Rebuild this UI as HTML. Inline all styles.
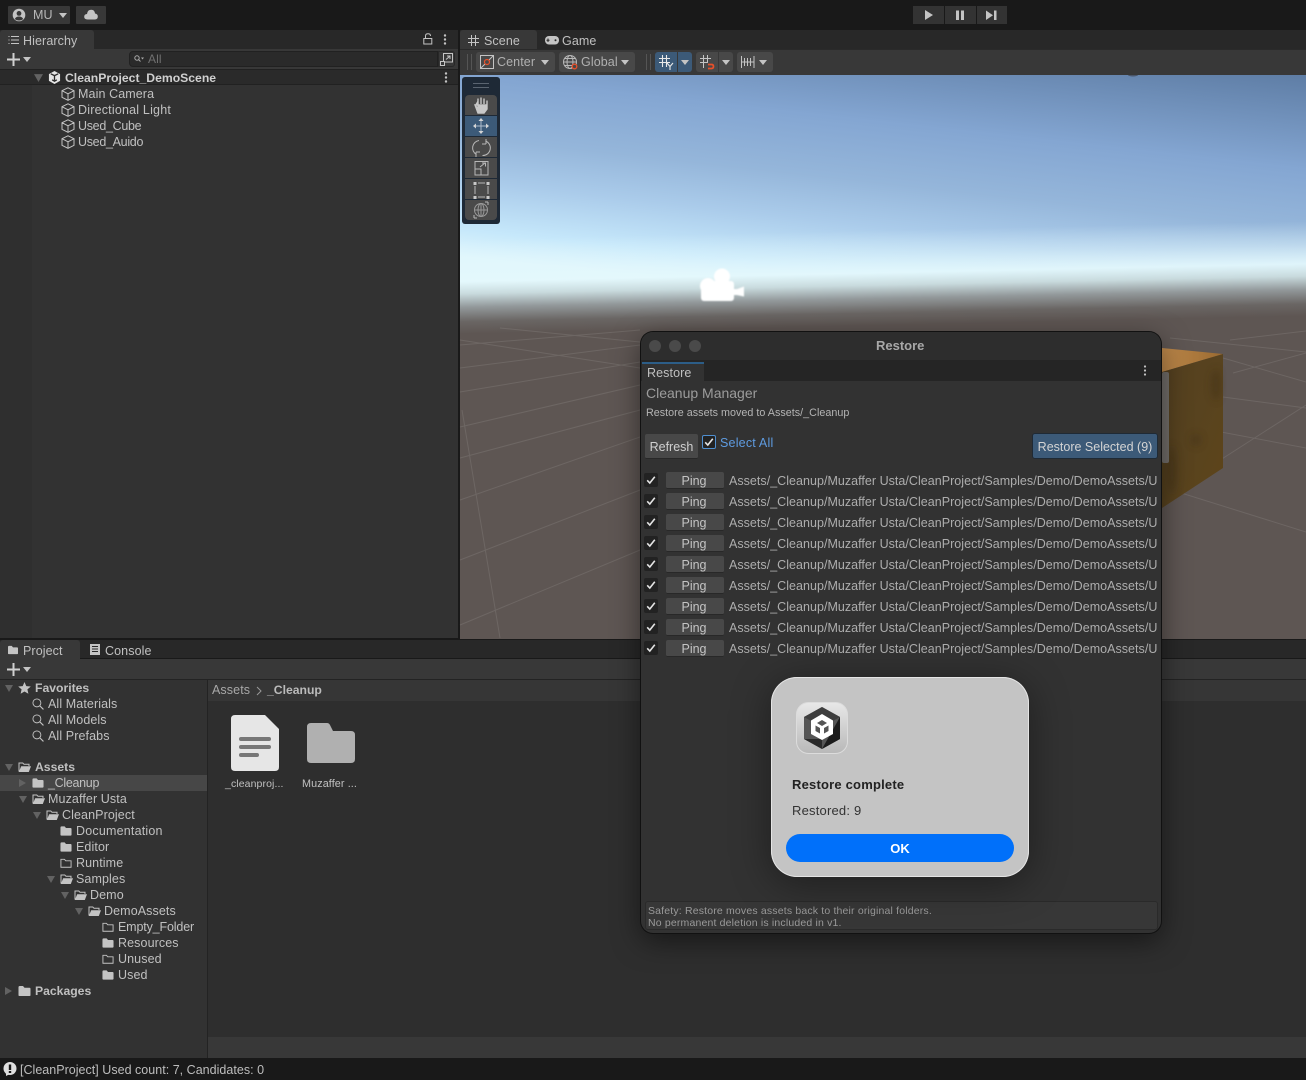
<!DOCTYPE html>
<html><head><meta charset="utf-8"><title>Unity</title>
<style>
html,body{margin:0;padding:0;background:#191919;}
#r{position:relative;width:1306px;height:1080px;overflow:hidden;background:#191919;font-family:"Liberation Sans",sans-serif;font-size:12.5px;color:#c0c0c0;}
.a{position:absolute;}
.t{position:absolute;white-space:nowrap;line-height:16px;height:16px;letter-spacing:.1px;}
.b{font-weight:bold;font-size:12.2px;letter-spacing:0;}
.u{letter-spacing:-.3px;}
svg.a{overflow:visible;}
.ck{position:absolute;left:644px;width:14px;height:14px;background:#222;border-radius:2px;}
.pg{position:absolute;left:666px;width:58px;height:17px;background:#484848;border-radius:2px;border-bottom:1px solid #282828;box-sizing:border-box;text-align:center;line-height:19px;color:#c4c4c4;padding-right:2px;}
.pt{position:absolute;left:729px;width:428px;overflow:hidden;white-space:nowrap;line-height:16px;height:16px;color:#adadad;font-size:12.5px;letter-spacing:.03px;}
.tb{position:absolute;background:#4a4a4a;}
</style></head><body><div id="r">
<svg width="0" height="0" style="position:absolute"><defs>
<symbol id="cube" viewBox="0 0 14 14"><path d="M7 .8 13 3.7V10.3L7 13.3 1 10.3V3.7ZM1 3.7 7 6.8 13 3.7M7 6.8V13.3" fill="none" stroke="#c4c4c4" stroke-width="1"/></symbol>
<symbol id="fc" viewBox="0 0 13 12"><path d="M.5 2.2Q.5 1 1.7 1H5L6.5 2.8H11.5Q12.5 2.8 12.5 3.8V10.2Q12.5 11 11.5 11H1.5Q.5 11 .5 10.2Z" fill="#c4c4c4"/></symbol>
<symbol id="fo" viewBox="0 0 13 12"><path d="M1 10.5V2H4.8L6 3.3H11V5" fill="none" stroke="#c4c4c4" stroke-width="1"/><path d="M3.2 5.2H13L10.8 11H.8Z" fill="#c4c4c4"/></symbol>
<symbol id="fe" viewBox="0 0 13 12"><path d="M1 2H4.8L6.2 3.6H12V10.6H1Z" fill="none" stroke="#c4c4c4" stroke-width="1"/></symbol>
<symbol id="mg" viewBox="0 0 13 13"><circle cx="5.3" cy="5.3" r="4.3" fill="none" stroke="#c4c4c4" stroke-width="1"/><path d="M8.4 8.4 12.4 12.4" stroke="#c4c4c4" stroke-width="1.2"/></symbol>
<symbol id="ad" viewBox="0 0 8 7"><path d="M0 0H8L4 7Z" fill="#626262"/></symbol>
<symbol id="ar" viewBox="0 0 7 8"><path d="M0 0V8L7 4Z" fill="#626262"/></symbol>
<symbol id="dd" viewBox="0 0 8 5"><path d="M0 0H8L4 5Z" fill="#c4c4c4"/></symbol>
<symbol id="chk" viewBox="0 0 14 14"><path d="M3.2 7.3 5.8 10 10.8 3.8" fill="none" stroke="#e4e4e4" stroke-width="1.6"/></symbol>
</defs></svg>

<!-- SCENE -->
<svg class="a" style="left:460px;top:75px" width="846" height="563" viewBox="460 75 846 563">
<defs>
<linearGradient id="sky" gradientUnits="userSpaceOnUse" x1="883" y1="30" x2="853" y2="300">
<stop offset="0" stop-color="#5f7ea6"/><stop offset=".34" stop-color="#84a6d2"/><stop offset=".56" stop-color="#95b6da"/><stop offset=".72" stop-color="#aacbea"/><stop offset=".9" stop-color="#c6e8fb"/><stop offset="1" stop-color="#dff6fc"/></linearGradient>
<linearGradient id="hz" gradientUnits="userSpaceOnUse" x1="883" y1="230" x2="885" y2="325">
<stop offset="0" stop-color="#e4f8fc" stop-opacity="0"/><stop offset=".25" stop-color="#e4f8fc" stop-opacity=".45"/><stop offset=".45" stop-color="#e4f8fc" stop-opacity=".92"/><stop offset=".58" stop-color="#c8dadd"/><stop offset=".72" stop-color="#92989a"/><stop offset=".87" stop-color="#6a6664"/><stop offset="1" stop-color="#5e5653"/></linearGradient>
<linearGradient id="side" x1="0" y1="0" x2="1" y2="1"><stop offset="0" stop-color="#544020"/><stop offset=".5" stop-color="#58431f"/><stop offset="1" stop-color="#5e4519"/></linearGradient>
<linearGradient id="top" x1="0" y1="0" x2="1" y2="0"><stop offset="0" stop-color="#c08a4c"/><stop offset="1" stop-color="#9a6a30"/></linearGradient>
<filter id="bl"><feGaussianBlur stdDeviation=".7"/></filter>
<filter id="bl2"><feGaussianBlur stdDeviation="4"/></filter>
</defs>
<rect x="460" y="75" width="846" height="265" fill="url(#sky)"/>
<rect x="460" y="220" width="846" height="120" fill="url(#hz)"/>
<rect x="460" y="334" width="846" height="305" fill="#5e5653"/>
<ellipse cx="1133" cy="75" rx="5" ry="1.500" fill="#4a566a"/>
<g stroke="#8a8582" stroke-width="1" opacity=".35" fill="none">
<path d="M460 345 640 330M460 368 640 345M460 392 640 362M460 427 640 385M460 458 640 410M460 500 640 437M460 560 640 490M460 625 640 550"/>
<path d="M462 410 500 638M460 340 640 368M500 328 640 342"/>
<path d="M1223 397 1306 408M1223 358 1306 382M1233 373 1306 353M1200 473 1306 405M1189 426 1306 448M1162 487 1306 532M1170 338 1306 352M1230 340 1306 331"/>
</g>
<path d="M1162 348 1223 354 1162 372Z" fill="url(#top)"/>
<path d="M1162 372 1223 354V468L1162 508Z" fill="url(#side)"/>
<g filter="url(#bl2)" fill="#3a2a14" opacity=".4"><ellipse cx="1216" cy="385" rx="5" ry="16"/><ellipse cx="1172" cy="470" rx="5" ry="25"/><ellipse cx="1196" cy="440" rx="5" ry="6"/></g>
<rect x="1162" y="372" width="7" height="91" rx="2" fill="#726e6a"/>
<g filter="url(#bl)" fill="#fff"><circle cx="722" cy="276.500" r="8"/><circle cx="708" cy="286" r="8"/><rect x="701" y="281" width="33" height="20" rx="3"/><path d="M733 289H737L744 286.500V296.500L737 295H733Z"/></g>
</svg>

<!-- tool overlay -->
<div class="a" style="left:462px;top:77px;width:38px;height:147px;background:#1e2936;border-radius:3px"></div>
<div class="a" style="left:473px;top:83px;width:16px;height:1px;background:#5a6470"></div>
<div class="a" style="left:473px;top:87px;width:16px;height:1px;background:#5a6470"></div>
<div class="tb" style="left:465px;top:95px;width:32px;height:20px;border-radius:4px 4px 0 0"></div>
<div class="tb" style="left:465px;top:116px;width:32px;height:20px;background:#3c5a78"></div>
<div class="tb" style="left:465px;top:137px;width:32px;height:20px"></div>
<div class="tb" style="left:465px;top:158px;width:32px;height:20px"></div>
<div class="tb" style="left:465px;top:179px;width:32px;height:20px"></div>
<div class="tb" style="left:465px;top:200px;width:32px;height:20px;border-radius:0 0 4px 4px"></div>
<svg class="a" style="left:465px;top:95px" width="32" height="126" viewBox="0 0 32 126" fill="none" stroke="#b8b8b8" stroke-width="1">
<path d="M10 10 13 14V5M13 9V3.500M16 9V2.500M19 9V3.500M22 10V5.500V14L19 18H13L10 10Z" fill="#c8c8c8" stroke="#c8c8c8" stroke-width="1.400"/>
<path d="M16 25V37M10 31H22" stroke="#aebccc"/><path d="M16 23 13.500 26H18.500ZM16 39 13.500 36H18.500ZM8 31 11 28.500V33.500ZM24 31 21 28.500V33.500Z" fill="#d4d4d4" stroke="none"/>
<path d="M11.500 59.500A7.500 7.500 0 0 1 14 45.500M20.500 46A7.500 7.500 0 0 1 17.500 60.500"/><path d="M21 44V49M21 49H17M11 62V57M11 57H15"/>
<rect x="10" y="66.500" width="13" height="13.500"/><rect x="10" y="74" width="6" height="6"/><path d="M15 72 20 68M17 68H20.500V71.500"/>
<path d="M13 88H20M13 102H20M10 91V99M23 91V99"/><rect x="8.500" y="87" width="3" height="3" fill="#c8c8c8" stroke="none"/><rect x="21.500" y="87" width="3" height="3" fill="#c8c8c8" stroke="none"/><rect x="8.500" y="101" width="3" height="3" fill="#c8c8c8" stroke="none"/><rect x="21.500" y="101" width="3" height="3" fill="#c8c8c8" stroke="none"/>
<circle cx="16" cy="115" r="6.500" stroke="#999"/><path d="M16 108V122M9 115H23" stroke="#999"/><ellipse cx="16" cy="115" rx="3" ry="6.500" stroke="#999"/><path d="M9 123 12 123M9 123 9 120M23 107H20M23 107V110"/>
</svg>

<!-- TOP BAR -->
<div class="a" style="left:8px;top:6px;width:62px;height:18px;background:#383838;border-radius:1px"></div>
<svg class="a" style="left:12px;top:8px" width="14" height="14" viewBox="0 0 14 14"><circle cx="7" cy="7" r="6.300" fill="#c4c4c4"/><circle cx="7" cy="5.400" r="2.400" fill="#383838"/><path d="M2.800 11Q4 8.500 7 8.500T11.200 11Q9.500 12.500 7 12.500T2.800 11Z" fill="#383838"/></svg>
<div class="t" style="left:33px;top:7px;color:#b8b8b8">MU</div>
<svg class="a" style="left:59px;top:13px" width="8" height="5"><use href="#dd"/></svg>
<div class="a" style="left:76px;top:6px;width:30px;height:18px;background:#383838;border-radius:1px"></div>
<svg class="a" style="left:84px;top:9px" width="14" height="11" viewBox="0 0 14 11"><path d="M3.500 10.500Q.2 10.500.2 7.800T3 5Q3.500 .8 7.300 .8 10.500 .8 11 4.500 14 5 13.800 7.800T10.800 10.500Z" fill="#c4c4c4"/></svg>
<div class="a" style="left:913px;top:6px;width:31px;height:18px;background:#333"></div>
<div class="a" style="left:945px;top:6px;width:31px;height:18px;background:#333"></div>
<div class="a" style="left:977px;top:6px;width:30px;height:18px;background:#333"></div>
<svg class="a" style="left:913px;top:6px" width="94" height="18" viewBox="0 0 94 18" fill="#c4c4c4"><path d="M12 4V14L20 9Z"/><rect x="43" y="4.500" width="3" height="9.500"/><rect x="48" y="4.500" width="3" height="9.500"/><path d="M73 4.500V14L80 9.200Z"/><rect x="81" y="4.500" width="2.500" height="9.500"/></svg>

<!-- HIERARCHY -->
<div class="a" style="left:0;top:30px;width:458px;height:19px;background:#282828"></div>
<div class="a" style="left:0;top:30px;width:94px;height:19px;background:#383838;border-radius:3px 3px 0 0"></div>
<svg class="a" style="left:8px;top:35px" width="11" height="10" viewBox="0 0 11 10" stroke="#c4c4c4" fill="none"><path d="M3 1.500H11M3 5H11M3 8.500H11M.5 1.500H1.500M.5 5H1.500M.5 8.500H1.500"/></svg>
<div class="t" style="left:23px;top:33px">Hierarchy</div>
<svg class="a" style="left:423px;top:33px" width="10" height="12" viewBox="0 0 10 12" fill="none" stroke="#c4c4c4"><path d="M2.500 5V3Q2.500 .8 5 .8T7.500 3"/><rect x=".8" y="5.500" width="8" height="5.500"/></svg>
<svg class="a" style="left:443px;top:34px" width="4" height="11" fill="#c4c4c4"><circle cx="2" cy="1.500" r="1.200"/><circle cx="2" cy="5.500" r="1.200"/><circle cx="2" cy="9.500" r="1.200"/></svg>
<div class="a" style="left:0;top:49px;width:458px;height:20px;background:#383838"></div>
<svg class="a" style="left:7px;top:53px" width="13" height="13"><path d="M6.500 0V13M0 6.500H13" stroke="#d0d0d0" stroke-width="2"/></svg>
<svg class="a" style="left:23px;top:57px" width="8" height="5"><use href="#dd"/></svg>
<div class="a" style="left:129px;top:51px;width:309px;height:16px;background:#2a2a2a;border-radius:4px 0 0 4px;border:1px solid #212121;box-sizing:border-box"></div>
<svg class="a" style="left:134px;top:55px" width="10" height="8" viewBox="0 0 10 8" fill="none" stroke="#aaa"><circle cx="3" cy="3" r="2.200"/><path d="M4.500 4.500 6.500 6.500"/><path d="M7 2.500H10L8.500 4.500Z" fill="#aaa" stroke="none"/></svg>
<div class="t" style="left:148px;top:51px;color:#707070;font-size:12px">All</div>
<div class="a" style="left:438px;top:51px;width:17px;height:16px;background:#383838;border:1px solid #282828;border-radius:0 3px 3px 0;box-sizing:border-box"></div>
<svg class="a" style="left:440px;top:53px" width="13" height="13" viewBox="0 0 13 13" fill="none" stroke="#c4c4c4"><rect x="3.500" y=".5" width="9" height="8.500"/><rect x=".5" y="8.500" width="4" height="4" fill="#383838"/><path d="M6 6.500 9.500 3.500M7 3H10V6"/></svg>
<div class="a" style="left:0;top:69px;width:458px;height:569px;background:#323232"></div>
<div class="a" style="left:0;top:85px;width:32px;height:553px;background:#2f2f2f"></div>
<div class="a" style="left:0;top:69px;width:458px;height:16px;background:#2a2a2a;border-top:1px solid #212121;border-bottom:1px solid #212121;box-sizing:border-box"></div>
<svg class="a" style="left:34px;top:74px" width="9" height="8"><use href="#ad"/></svg>
<svg class="a" style="left:48px;top:71px" width="13" height="13" viewBox="0 0 14 14"><path d="M7 0 13 3.400V10.600L7 14 1 10.600V3.400Z" fill="#e4e4e4"/><path d="M7 5 3 3M7 5 11 3M7 5V10M4.500 9.500 7 11 9.500 9.500" stroke="#2a2a2a" stroke-width="1.400" fill="none"/></svg>
<div class="t b" style="left:65px;top:70px;color:#d0d0d0">CleanProject_DemoScene</div>
<svg class="a" style="left:444px;top:72px" width="4" height="11" fill="#c4c4c4"><circle cx="2" cy="1.500" r="1.200"/><circle cx="2" cy="5.500" r="1.200"/><circle cx="2" cy="9.500" r="1.200"/></svg>
<svg class="a" style="left:61px;top:87px" width="14" height="14"><use href="#cube"/></svg><div class="t" style="left:78px;top:86px">Main Camera</div>
<svg class="a" style="left:61px;top:103px" width="14" height="14"><use href="#cube"/></svg><div class="t" style="left:78px;top:102px;letter-spacing:.2px">Directional Light</div>
<svg class="a" style="left:61px;top:119px" width="14" height="14"><use href="#cube"/></svg><div class="t u" style="left:78px;top:118px">Used_Cube</div>
<svg class="a" style="left:61px;top:135px" width="14" height="14"><use href="#cube"/></svg><div class="t u" style="left:78px;top:134px">Used_Auido</div>

<!-- SCENE TABS + TOOLBAR -->
<div class="a" style="left:460px;top:30px;width:846px;height:19px;background:#282828"></div>
<div class="a" style="left:460px;top:30px;width:77px;height:19px;background:#383838;border-radius:3px 3px 0 0"></div>
<svg class="a" style="left:468px;top:35px" width="11" height="11" stroke="#c4c4c4" fill="none"><path d="M3.500 0V11M7.500 0V11M0 3.500H11M0 7.500H11"/></svg>
<div class="t" style="left:484px;top:33px">Scene</div>
<svg class="a" style="left:545px;top:36px" width="14" height="9" viewBox="0 0 14 9"><rect x="0" y="0" width="14" height="8.500" rx="4" fill="#c4c4c4"/><path d="M3 2.500V6M1.500 4.200H4.500" stroke="#282828"/><circle cx="10.500" cy="4.200" r="1" fill="#282828"/></svg>
<div class="t" style="left:562px;top:33px">Game</div>
<div class="a" style="left:460px;top:49px;width:846px;height:26px;background:#383838;border-top:1px solid #2a2a2a;box-sizing:border-box"></div>
<div class="a" style="left:467px;top:54px;width:3px;height:16px;border-left:1px solid #555;border-right:1px solid #555"></div>
<div class="a" style="left:476px;top:52px;width:79px;height:20px;background:#484848;border-radius:3px"></div>
<svg class="a" style="left:480px;top:55px" width="14" height="14" viewBox="0 0 14 14" fill="none"><rect x=".5" y=".5" width="13" height="13" stroke="#c4c4c4"/><path d="M1 13 13 1" stroke="#c4c4c4"/><circle cx="7" cy="7" r="2.500" stroke="#e8502a" stroke-width="1.200" fill="#484848"/></svg>
<div class="t" style="left:497px;top:54px;color:#b0b0b0">Center</div>
<svg class="a" style="left:541px;top:60px" width="8" height="5"><use href="#dd"/></svg>
<div class="a" style="left:559px;top:52px;width:76px;height:20px;background:#484848;border-radius:3px"></div>
<svg class="a" style="left:563px;top:55px" width="15" height="15" viewBox="0 0 15 15" fill="none" stroke="#b8b8b8"><circle cx="7" cy="7" r="6.500"/><ellipse cx="7" cy="7" rx="3" ry="6.500"/><path d="M.5 7H13.500M1.500 3.500H12.500M1.500 10.500H12.500"/><circle cx="11.500" cy="11.500" r="2.300" stroke="#e8502a" stroke-width="1.300" fill="#484848"/></svg>
<div class="t" style="left:581px;top:54px;color:#b0b0b0">Global</div>
<svg class="a" style="left:621px;top:60px" width="8" height="5"><use href="#dd"/></svg>
<div class="a" style="left:646px;top:54px;width:3px;height:16px;border-left:1px solid #555;border-right:1px solid #555"></div>
<div class="a" style="left:655px;top:52px;width:22px;height:20px;background:#3c5a78;border-radius:3px 0 0 3px"></div>
<div class="a" style="left:678px;top:52px;width:14px;height:20px;background:#3c5a78;border-radius:0 3px 3px 0"></div>
<svg class="a" style="left:659px;top:55px" width="15" height="15" viewBox="0 0 15 15" fill="none" stroke="#e8e8e8"><path d="M3.500 0V12M7.500 0V12M0 3.500H11M0 7.500H11M8 8 11 11.500 14 8M11 11.500V15" stroke-width="1.100"/></svg>
<svg class="a" style="left:681px;top:60px" width="8" height="5"><use href="#dd"/></svg>
<div class="a" style="left:696px;top:52px;width:22px;height:20px;background:#484848;border-radius:3px 0 0 3px"></div>
<div class="a" style="left:719px;top:52px;width:14px;height:20px;background:#484848;border-radius:0 3px 3px 0"></div>
<svg class="a" style="left:700px;top:55px" width="15" height="15" viewBox="0 0 15 15" fill="none"><path d="M3.500 0V13M7.500 0V8M0 3.500H11M0 7.500H8" stroke="#c4c4c4"/><path d="M8 9.500H11.500Q13.500 9.500 13.500 11.500T11.500 13.500H8" stroke="#e8502a" stroke-width="1.700"/></svg>
<svg class="a" style="left:722px;top:60px" width="8" height="5"><use href="#dd"/></svg>
<div class="a" style="left:737px;top:52px;width:36px;height:20px;background:#484848;border-radius:3px"></div>
<svg class="a" style="left:741px;top:55px" width="14" height="14" fill="none" stroke="#c4c4c4"><path d="M.5 1V13M13 1V13M3.500 3V11M6.500 3V11M9.500 3V11M.5 7H13"/></svg>
<svg class="a" style="left:759px;top:60px" width="8" height="5"><use href="#dd"/></svg>

<!-- PROJECT -->
<div class="a" style="left:0;top:640px;width:1306px;height:18px;background:#282828"></div>
<div class="a" style="left:0;top:640px;width:80px;height:19px;background:#383838;border-radius:3px 3px 0 0"></div>
<svg class="a" style="left:7px;top:645px" width="12" height="10"><use href="#fc"/></svg>
<div class="t" style="left:23px;top:643px">Project</div>
<svg class="a" style="left:90px;top:644px" width="10" height="11" viewBox="0 0 10 11"><rect width="10" height="11" fill="#c4c4c4"/><path d="M2 2.500H8M2 5H8M2 7.500H8" stroke="#282828"/></svg>
<div class="t" style="left:105px;top:643px">Console</div>
<div class="a" style="left:0;top:659px;width:1306px;height:20px;background:#383838"></div>
<svg class="a" style="left:7px;top:663px" width="13" height="13"><path d="M6.500 0V13M0 6.500H13" stroke="#d0d0d0" stroke-width="2"/></svg>
<svg class="a" style="left:23px;top:667px" width="8" height="5"><use href="#dd"/></svg>
<div class="a" style="left:0;top:679px;width:1306px;height:1px;background:#232323"></div>
<div class="a" style="left:0;top:680px;width:207px;height:378px;background:#323232"></div>
<div class="a" style="left:207px;top:680px;width:1px;height:378px;background:#232323"></div>
<div class="a" style="left:208px;top:680px;width:1098px;height:21px;background:#363636"></div>
<div class="a" style="left:208px;top:701px;width:1098px;height:336px;background:#2e2e2e"></div>
<div class="a" style="left:208px;top:1037px;width:1098px;height:21px;background:#383838"></div>
<div class="t" style="left:212px;top:682px;color:#a8a8a8">Assets</div>
<svg class="a" style="left:256px;top:686px" width="6" height="10" fill="none" stroke="#999"><path d="M1 1 5 5 1 9"/></svg>
<div class="t b" style="left:267px;top:682px;color:#bbb">_Cleanup</div>
<svg class="a" style="left:231px;top:715px" width="48" height="56" viewBox="0 0 48 56"><path d="M4 0H34L48 14V52Q48 56 44 56H4Q0 56 0 52V4Q0 0 4 0Z" fill="#e6e6e6"/><rect x="8" y="22" width="32" height="4" rx="2" fill="#777"/><rect x="8" y="30" width="32" height="4" rx="2" fill="#777"/><rect x="8" y="38" width="20" height="4" rx="2" fill="#777"/></svg>
<svg class="a" style="left:307px;top:723px" width="48" height="40" viewBox="0 0 48 40"><path d="M0 4Q0 0 4 0H20Q22 0 23 2L26 8H44Q48 8 48 12V36Q48 40 44 40H4Q0 40 0 36Z" fill="#b0b0b0"/></svg>
<div class="t" style="left:225px;top:776px;font-size:10.500px">_cleanproj...</div>
<div class="t" style="left:302px;top:776px;font-size:10.800px">Muzaffer ...</div>

<!-- tree -->
<div class="a" style="left:0;top:775px;width:207px;height:16px;background:#474747"></div>
<svg class="a" style="left:5px;top:685px" width="8" height="7"><use href="#ad"/></svg>
<svg class="a" style="left:18px;top:682px" width="13" height="12" viewBox="0 0 13 12"><path d="M6.500 0 8.300 4.100 12.800 4.500 9.400 7.400 10.400 11.800 6.500 9.500 2.600 11.800 3.600 7.400 .2 4.500 4.700 4.100Z" fill="#c4c4c4"/></svg>
<div class="t b" style="left:35px;top:680px">Favorites</div>
<svg class="a" style="left:32px;top:698px" width="12" height="12"><use href="#mg"/></svg><div class="t" style="left:48px;top:696px">All Materials</div>
<svg class="a" style="left:32px;top:714px" width="12" height="12"><use href="#mg"/></svg><div class="t" style="left:48px;top:712px">All Models</div>
<svg class="a" style="left:32px;top:730px" width="12" height="12"><use href="#mg"/></svg><div class="t" style="left:48px;top:728px">All Prefabs</div>
<svg class="a" style="left:5px;top:764px" width="8" height="7"><use href="#ad"/></svg>
<svg class="a" style="left:18px;top:761px" width="13" height="12"><use href="#fo"/></svg><div class="t b" style="left:35px;top:759px">Assets</div>
<svg class="a" style="left:19px;top:779px" width="7" height="8"><use href="#ar"/></svg>
<svg class="a" style="left:32px;top:777px" width="12" height="12"><use href="#fc"/></svg><div class="t u" style="left:48px;top:775px">_Cleanup</div>
<svg class="a" style="left:19px;top:796px" width="8" height="7"><use href="#ad"/></svg>
<svg class="a" style="left:32px;top:793px" width="13" height="12"><use href="#fo"/></svg><div class="t" style="left:48px;top:791px">Muzaffer Usta</div>
<svg class="a" style="left:33px;top:812px" width="8" height="7"><use href="#ad"/></svg>
<svg class="a" style="left:46px;top:809px" width="13" height="12"><use href="#fo"/></svg><div class="t" style="left:62px;top:807px">CleanProject</div>
<svg class="a" style="left:60px;top:825px" width="12" height="12"><use href="#fc"/></svg><div class="t" style="left:76px;top:823px;letter-spacing:.2px">Documentation</div>
<svg class="a" style="left:60px;top:841px" width="12" height="12"><use href="#fc"/></svg><div class="t" style="left:76px;top:839px">Editor</div>
<svg class="a" style="left:60px;top:857px" width="12" height="12"><use href="#fe"/></svg><div class="t" style="left:76px;top:855px">Runtime</div>
<svg class="a" style="left:47px;top:876px" width="8" height="7"><use href="#ad"/></svg>
<svg class="a" style="left:60px;top:873px" width="13" height="12"><use href="#fo"/></svg><div class="t" style="left:76px;top:871px">Samples</div>
<svg class="a" style="left:61px;top:892px" width="8" height="7"><use href="#ad"/></svg>
<svg class="a" style="left:74px;top:889px" width="13" height="12"><use href="#fo"/></svg><div class="t" style="left:90px;top:887px">Demo</div>
<svg class="a" style="left:75px;top:908px" width="8" height="7"><use href="#ad"/></svg>
<svg class="a" style="left:88px;top:905px" width="13" height="12"><use href="#fo"/></svg><div class="t" style="left:104px;top:903px">DemoAssets</div>
<svg class="a" style="left:102px;top:921px" width="12" height="12"><use href="#fe"/></svg><div class="t" style="left:118px;top:919px;letter-spacing:-.15px">Empty_Folder</div>
<svg class="a" style="left:102px;top:937px" width="12" height="12"><use href="#fc"/></svg><div class="t" style="left:118px;top:935px">Resources</div>
<svg class="a" style="left:102px;top:953px" width="12" height="12"><use href="#fe"/></svg><div class="t" style="left:118px;top:951px">Unused</div>
<svg class="a" style="left:102px;top:969px" width="12" height="12"><use href="#fc"/></svg><div class="t" style="left:118px;top:967px">Used</div>
<svg class="a" style="left:5px;top:987px" width="7" height="8"><use href="#ar"/></svg>
<svg class="a" style="left:18px;top:985px" width="13" height="12"><use href="#fc"/></svg><div class="t b" style="left:35px;top:983px">Packages</div>

<!-- status -->
<div class="a" style="left:0;top:1058px;width:1306px;height:22px;background:#191919"></div>
<svg class="a" style="left:3px;top:1062px" width="14" height="14" viewBox="0 0 14 14"><circle cx="7" cy="6.500" r="6.500" fill="#e0e0e0"/><path d="M3 10V14L7 12Z" fill="#e0e0e0"/><rect x="5.800" y="2.500" width="2.400" height="5.500" fill="#191919"/><rect x="5.800" y="9" width="2.400" height="2" fill="#191919"/></svg>
<div class="t" style="left:20px;top:1062px;color:#bdbdbd;letter-spacing:.02px">[CleanProject] Used count: 7, Candidates: 0</div>

<!-- RESTORE WINDOW -->
<div class="a" style="left:641px;top:332px;width:520px;height:601px;background:#323232;border-radius:12px;box-shadow:0 0 0 1px #111,0 8px 28px rgba(0,0,0,.5);overflow:hidden">
<div class="a" style="left:0;top:0;width:520px;height:28px;background:#2d2d2d"></div>
<div class="a" style="left:0;top:28px;width:520px;height:21px;background:#252525"></div>
<div class="a" style="left:1px;top:30px;width:62px;height:19px;background:#323232;border-top:2px solid #2c5d87;box-sizing:border-box"></div>
</div>
<div class="a" style="left:649px;top:340px;width:12px;height:12px;border-radius:50%;background:#4a4a4a"></div>
<div class="a" style="left:669px;top:340px;width:12px;height:12px;border-radius:50%;background:#4a4a4a"></div>
<div class="a" style="left:689px;top:340px;width:12px;height:12px;border-radius:50%;background:#4a4a4a"></div>
<div class="t b" style="left:876px;top:338px;color:#a8a8a8;font-size:13px">Restore</div>
<div class="t" style="left:647px;top:365px">Restore</div>
<svg class="a" style="left:1143px;top:365px" width="4" height="11" fill="#c4c4c4"><circle cx="2" cy="1.500" r="1.100"/><circle cx="2" cy="5.500" r="1.100"/><circle cx="2" cy="9.500" r="1.100"/></svg>
<div class="t" style="left:646px;top:385px;color:#9c9c9c;font-size:14px;letter-spacing:0">Cleanup Manager</div>
<div class="t" style="left:646px;top:405px;color:#b4b4b4;font-size:10.750px;letter-spacing:.02px">Restore assets moved to Assets/_Cleanup</div>
<div class="a" style="left:645px;top:434px;width:53px;height:25px;background:#484848;border-radius:2px;border-bottom:1px solid #282828;box-sizing:border-box;line-height:27px;text-align:center;color:#d0d0d0">Refresh</div>
<div class="a" style="left:702px;top:435px;width:14px;height:14px;background:#222;border:1px solid #4f8fd0;border-radius:2px;box-sizing:border-box"></div>
<svg class="a" style="left:702px;top:435px" width="14" height="14"><use href="#chk"/></svg>
<div class="t" style="left:720px;top:435px;color:#5e9be0;letter-spacing:.2px">Select All</div>
<div class="a" style="left:1032px;top:433px;width:126px;height:26px;background:#3c5a78;border:1px solid #1f2a35;border-radius:3px;box-sizing:border-box;line-height:26px;text-align:center;color:#d4d4d4">Restore Selected (9)</div>

<div class="ck" style="top:473px"></div><svg class="a" style="left:644px;top:473px" width="14" height="14"><use href="#chk"/></svg><div class="pg" style="top:472px">Ping</div><div class="pt" style="top:473px">Assets/_Cleanup/Muzaffer Usta/CleanProject/Samples/Demo/DemoAssets/U</div>
<div class="ck" style="top:494px"></div><svg class="a" style="left:644px;top:494px" width="14" height="14"><use href="#chk"/></svg><div class="pg" style="top:493px">Ping</div><div class="pt" style="top:494px">Assets/_Cleanup/Muzaffer Usta/CleanProject/Samples/Demo/DemoAssets/U</div>
<div class="ck" style="top:515px"></div><svg class="a" style="left:644px;top:515px" width="14" height="14"><use href="#chk"/></svg><div class="pg" style="top:514px">Ping</div><div class="pt" style="top:515px">Assets/_Cleanup/Muzaffer Usta/CleanProject/Samples/Demo/DemoAssets/U</div>
<div class="ck" style="top:536px"></div><svg class="a" style="left:644px;top:536px" width="14" height="14"><use href="#chk"/></svg><div class="pg" style="top:535px">Ping</div><div class="pt" style="top:536px">Assets/_Cleanup/Muzaffer Usta/CleanProject/Samples/Demo/DemoAssets/U</div>
<div class="ck" style="top:557px"></div><svg class="a" style="left:644px;top:557px" width="14" height="14"><use href="#chk"/></svg><div class="pg" style="top:556px">Ping</div><div class="pt" style="top:557px">Assets/_Cleanup/Muzaffer Usta/CleanProject/Samples/Demo/DemoAssets/U</div>
<div class="ck" style="top:578px"></div><svg class="a" style="left:644px;top:578px" width="14" height="14"><use href="#chk"/></svg><div class="pg" style="top:577px">Ping</div><div class="pt" style="top:578px">Assets/_Cleanup/Muzaffer Usta/CleanProject/Samples/Demo/DemoAssets/U</div>
<div class="ck" style="top:599px"></div><svg class="a" style="left:644px;top:599px" width="14" height="14"><use href="#chk"/></svg><div class="pg" style="top:598px">Ping</div><div class="pt" style="top:599px">Assets/_Cleanup/Muzaffer Usta/CleanProject/Samples/Demo/DemoAssets/U</div>
<div class="ck" style="top:620px"></div><svg class="a" style="left:644px;top:620px" width="14" height="14"><use href="#chk"/></svg><div class="pg" style="top:619px">Ping</div><div class="pt" style="top:620px">Assets/_Cleanup/Muzaffer Usta/CleanProject/Samples/Demo/DemoAssets/U</div>
<div class="ck" style="top:641px"></div><svg class="a" style="left:644px;top:641px" width="14" height="14"><use href="#chk"/></svg><div class="pg" style="top:640px">Ping</div><div class="pt" style="top:641px">Assets/_Cleanup/Muzaffer Usta/CleanProject/Samples/Demo/DemoAssets/U</div>

<!-- help box -->
<div class="a" style="left:645px;top:901px;width:513px;height:29px;background:#373737;border:1px solid #2a2a2a;border-radius:3px;box-sizing:border-box"></div>
<div class="t" style="left:648px;top:903px;font-size:10.500px;color:#9a9a9a;letter-spacing:.17px">Safety: Restore moves assets back to their original folders.</div>
<div class="t" style="left:648px;top:915px;font-size:10.500px;color:#9a9a9a;letter-spacing:.17px">No permanent deletion is included in v1.</div>

<!-- MODAL -->
<div class="a" style="left:771px;top:677px;width:258px;height:200px;background:#c4c4c4;border-radius:26px;box-shadow:0 0 0 1px #e4e4e4 inset,0 6px 40px rgba(0,0,0,.4)"></div>
<svg class="a" style="left:796px;top:702px" width="52" height="52" viewBox="0 0 52 52">
<defs><linearGradient id="ic" x1="0" y1="0" x2="0" y2="1"><stop offset="0" stop-color="#e8e8e8"/><stop offset="1" stop-color="#b8b8b8"/></linearGradient></defs>
<rect x=".5" y=".5" width="51" height="51" rx="12" fill="url(#ic)" stroke="#dcdcdc"/>
<path d="M26 5 44 15V37L26 47 8 37V15Z" fill="#555"/><path d="M26 5 44 15 26 25 8 15Z" fill="#3e3e3e"/><path d="M8 37 26 47V37Z" fill="#2a2a2a"/><path d="M44 15V37L26 47Z" fill="#1c1c1c"/>
<path d="M26 12 37 18.500V32L26 38 15 32V18.500Z" fill="#fff"/>
<path d="M26 18 21 21 26 24 31 21ZM19.500 23.500V29L24 31.500V26ZM32.500 23.500V29L28 31.500V26Z" fill="#555"/>
</svg>
<div class="t b" style="left:792px;top:777px;color:#222;font-size:13px;letter-spacing:.2px">Restore complete</div>
<div class="t" style="left:792px;top:803px;color:#333;font-size:13px;letter-spacing:.2px">Restored: 9</div>
<div class="a" style="left:786px;top:834px;width:228px;height:28px;background:#0070fa;border-radius:14px;line-height:29px;text-align:center;color:#fff;font-weight:bold;font-size:13px">OK</div>
</div></body></html>
